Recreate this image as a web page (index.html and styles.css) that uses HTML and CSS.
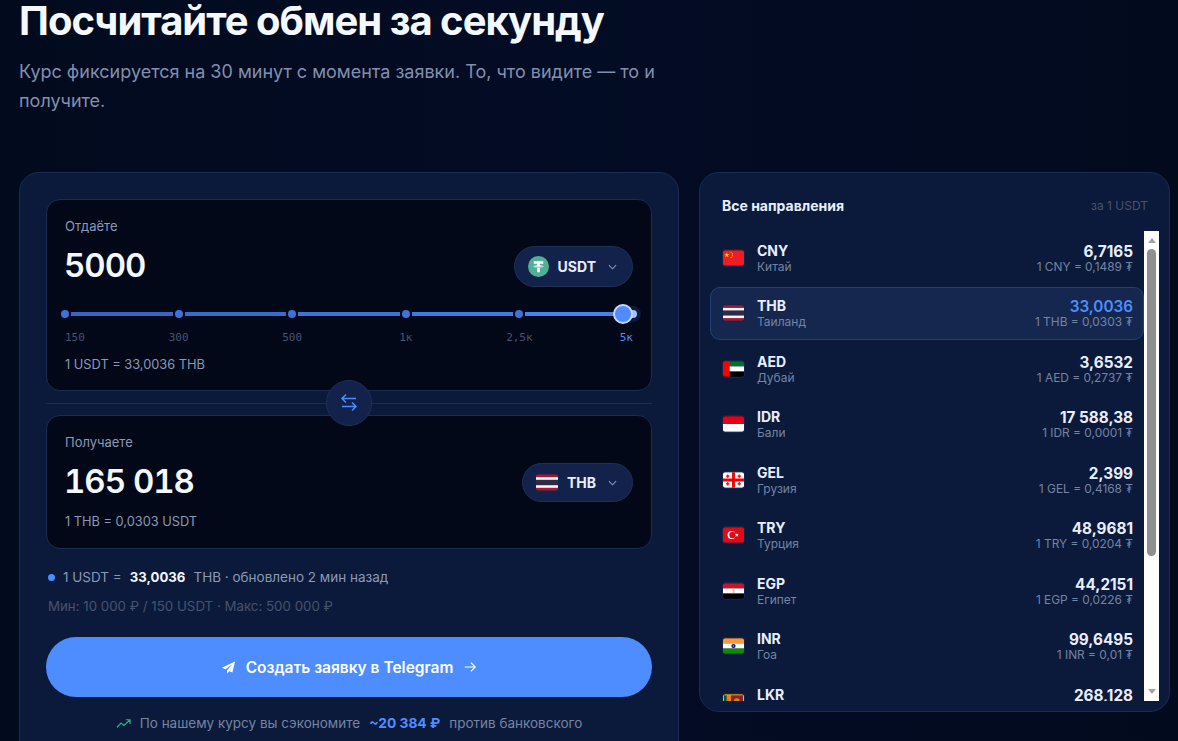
FILE: index.html
```html
<!DOCTYPE html>
<html lang="ru">

<head>
  <meta charset="UTF-8" />
  <title>Посчитайте обмен за секунду</title>
  <link rel="stylesheet" href="styles.css">
</head>

<body>
  <header class="intro">
    <h1>Посчитайте обмен за секунду</h1>
    <p>Курс фиксируется на 30 минут с момента заявки. То, что видите — то и получите.</p>
  </header>

  <main class="layout">
    <!-- Calculator -->
    <section class="card calc">
      <div class="box box-give">
        <div class="box-label">Отдаёте</div>
        <div class="amount-row">
          <div class="amount">5000</div>
          <button class="pill">
            <svg class="coin" viewBox="0 0 22 22">
              <circle cx="11" cy="11" r="11" fill="#50af95" />
              <path d="M6 5.500h10v2.600h-3.600v1.600c2.200.1 4 .6 4 1.200s-1.800 1.100-4 1.200v5H9.600v-5c-2.200-.1-4-.6-4-1.200s1.800-1.100 4-1.200V8.100H6z" fill="#fff" />
              <path d="M5.800 10.900c1.200.6 3 .8 5.200.8s4-.2 5.200-.8" fill="none" stroke="#50af95" stroke-width=".8" />
            </svg>
            <span>USDT</span>
            <svg class="chev" viewBox="0 0 10 6"><path d="M1 1l4 4 4-4" /></svg>
          </button>
        </div>

        <div class="slider">
          <i class="dot"></i><i class="seg s1"></i>
          <i class="dot"></i><i class="seg s2"></i>
          <i class="dot"></i><i class="seg s3"></i>
          <i class="dot"></i><i class="seg s4"></i>
          <i class="dot"></i><i class="seg s5"></i>
          <i class="dot last"></i>
          <span class="thumb"></span>
        </div>
        <div class="ticks">
          <span><em>150</em></span><span><em>300</em></span><span><em>500</em></span><span><em>1к</em></span><span><em>2,5к</em></span><span class="on"><em>5к</em></span>
        </div>
        <div class="rate-note">1 USDT = 33,0036 THB</div>
      </div>

      <div class="divider">
        <button class="swap">
          <svg viewBox="0 0 20 20">
            <path d="M17 6.500H3.500M7 2.500l-4 4 4 4" transform="translate(0 -1)" />
            <path d="M3 14h13.500M13 10l4 4-4 4" transform="translate(0 -.500)" />
          </svg>
        </button>
      </div>

      <div class="box box-get">
        <div class="box-label">Получаете</div>
        <div class="amount-row">
          <div class="amount">165 018</div>
          <button class="pill">
            <svg class="flag pill-flag" viewBox="0 0 22 16">
              <rect width="22" height="16" fill="#a51931" />
              <rect y="2.700" width="22" height="10.600" fill="#f4f5f8" />
              <rect y="5.300" width="22" height="5.400" fill="#2d2a4a" />
            </svg>
            <span>THB</span>
            <svg class="chev" viewBox="0 0 10 6"><path d="M1 1l4 4 4-4" /></svg>
          </button>
        </div>
        <div class="rate-note">1 THB = 0,0303 USDT</div>
      </div>

      <div class="live">
        <i class="live-dot"></i>
        <span>1 USDT =</span>
        <b>33,0036</b>
        <span>THB · обновлено 2 мин назад</span>
      </div>
      <div class="limits">Мин: 10 000 ₽ / 150 USDT · Макс: 500 000 ₽</div>

      <button class="cta">
        <svg class="plane" viewBox="0 0 16 16">
          <path d="M15 1.500L.8 8.200l4 1.600L12 4.500 6.500 10.800v3.700l2.400-2.600 3.300 1.500z" />
        </svg>
        <span>Создать заявку в Telegram</span>
        <svg class="arrow" viewBox="0 0 16 16"><path d="M2 8h12M9 3l5 5-5 5" /></svg>
      </button>

      <div class="saving">
        <svg viewBox="0 0 16 16"><path d="M1 12l4.500-4.500 3 2.500L15 4M10.500 4H15v4.500" /></svg>
        <span>По нашему курсу вы сэкономите</span>
        <b>~20 384 ₽</b>
        <span>против банковского</span>
      </div>
    </section>

    <!-- Rates -->
    <aside class="card rates">
      <div class="rates-head">
        <h2>Все направления</h2>
        <span>за 1 USDT</span>
      </div>
      <div class="rates-body">
        <div class="rate-list">
          <div class="rate">
            <svg class="flag" viewBox="0 0 22 16">
              <rect width="22" height="16" fill="#ee1c25" />
              <path d="M4 2l.7 2h2.100L5.100 5.200l.6 2L4 6l-1.700 1.200.6-2L1.200 4h2.100z" fill="#ffdd00" />
              <circle cx="8.500" cy="2" r=".6" fill="#ffdd00" /><circle cx="9.800" cy="3.700" r=".6" fill="#ffdd00" />
              <circle cx="9.800" cy="5.700" r=".6" fill="#ffdd00" /><circle cx="8.500" cy="7.300" r=".6" fill="#ffdd00" />
            </svg>
            <div class="rate-name"><b>CNY</b><span>Китай</span></div>
            <div class="rate-val"><b>6,7165</b><span>1 CNY = 0,1489 ₮</span></div>
          </div>
          <div class="rate active">
            <svg class="flag" viewBox="0 0 22 16">
              <rect width="22" height="16" fill="#a51931" />
              <rect y="2.700" width="22" height="10.600" fill="#f4f5f8" />
              <rect y="5.300" width="22" height="5.400" fill="#2d2a4a" />
            </svg>
            <div class="rate-name"><b>THB</b><span>Таиланд</span></div>
            <div class="rate-val"><b>33,0036</b><span>1 THB = 0,0303 ₮</span></div>
          </div>
          <div class="rate">
            <svg class="flag" viewBox="0 0 22 16">
              <rect width="22" height="5.400" fill="#00732f" />
              <rect y="5.300" width="22" height="5.400" fill="#fff" />
              <rect y="10.700" width="22" height="5.300" fill="#000" />
              <rect width="7" height="16" fill="#ff0000" />
            </svg>
            <div class="rate-name"><b>AED</b><span>Дубай</span></div>
            <div class="rate-val"><b>3,6532</b><span>1 AED = 0,2737 ₮</span></div>
          </div>
          <div class="rate">
            <svg class="flag" viewBox="0 0 22 16">
              <rect width="22" height="8" fill="#e70011" />
              <rect y="8" width="22" height="8" fill="#fff" />
            </svg>
            <div class="rate-name"><b>IDR</b><span>Бали</span></div>
            <div class="rate-val"><b>17 588,38</b><span>1 IDR = 0,0001 ₮</span></div>
          </div>
          <div class="rate">
            <svg class="flag" viewBox="0 0 22 16">
              <rect width="22" height="16" fill="#fff" />
              <path d="M9.500 0h3v16h-3zM0 6.500h22v3H0z" fill="#f00000" />
              <path d="M4.400 2.200h1.200v1.200h1.200v1.200H5.600v1.200H4.400V4.600H3.200V3.400h1.200zM16.400 2.200h1.200v1.200h1.200v1.200h-1.200v1.200h-1.200V4.600h-1.200V3.400h1.200zM4.400 10.200h1.200v1.200h1.200v1.200H5.600v1.200H4.400v-1.200H3.200v-1.200h1.200zM16.400 10.200h1.200v1.200h1.200v1.200h-1.200v1.200h-1.200v-1.200h-1.200v-1.200h1.200z" fill="#f00000" />
            </svg>
            <div class="rate-name"><b>GEL</b><span>Грузия</span></div>
            <div class="rate-val"><b>2,399</b><span>1 GEL = 0,4168 ₮</span></div>
          </div>
          <div class="rate">
            <svg class="flag" viewBox="0 0 22 16">
              <rect width="22" height="16" fill="#e30a17" />
              <circle cx="9" cy="8" r="4.200" fill="#fff" />
              <circle cx="10" cy="8" r="3.400" fill="#e30a17" />
              <path d="M14.500 5.800l.5 1.500h1.600l-1.300 1 .5 1.600-1.300-1-1.300 1 .5-1.600-1.300-1H14z" fill="#fff" />
            </svg>
            <div class="rate-name"><b>TRY</b><span>Турция</span></div>
            <div class="rate-val"><b>48,9681</b><span>1 TRY = 0,0204 ₮</span></div>
          </div>
          <div class="rate">
            <svg class="flag" viewBox="0 0 22 16">
              <rect width="22" height="5.400" fill="#ce1126" />
              <rect y="5.300" width="22" height="5.400" fill="#fff" />
              <rect y="10.700" width="22" height="5.300" fill="#000" />
              <rect x="10" y="5.800" width="2" height="4.400" fill="#e0c48a" />
            </svg>
            <div class="rate-name"><b>EGP</b><span>Египет</span></div>
            <div class="rate-val"><b>44,2151</b><span>1 EGP = 0,0226 ₮</span></div>
          </div>
          <div class="rate">
            <svg class="flag" viewBox="0 0 22 16">
              <rect width="22" height="5.400" fill="#ff9933" />
              <rect y="5.300" width="22" height="5.400" fill="#fff" />
              <rect y="10.700" width="22" height="5.300" fill="#138808" />
              <circle cx="11" cy="8" r="2.200" fill="#000080" />
              <circle cx="11" cy="8" r=".8" fill="#c8c8ff" />
            </svg>
            <div class="rate-name"><b>INR</b><span>Гоа</span></div>
            <div class="rate-val"><b>99,6495</b><span>1 INR = 0,01 ₮</span></div>
          </div>
          <div class="rate">
            <svg class="flag" viewBox="0 0 22 16">
              <rect width="22" height="16" fill="#ffb700" />
              <rect x="1" y="1" width="3" height="14" fill="#005641" />
              <rect x="4" y="1" width="3" height="14" fill="#ff7300" />
              <rect x="8" y="1" width="13" height="14" fill="#8d2029" />
              <circle cx="14.500" cy="7" r="3" fill="#c8862a" />
            </svg>
            <div class="rate-name"><b>LKR</b><span>Шри-Ланка</span></div>
            <div class="rate-val"><b>268,128</b><span>1 LKR = 0,0037 ₮</span></div>
          </div>
        </div>
        <!-- light scrollbar beside the list -->
        <div class="scrollbar">
          <i class="scroll-up"></i>
          <i class="scroll-thumb"></i>
          <i class="scroll-down"></i>
        </div>
      </div>
    </aside>
  </main>
</body>

</html>
```

FILE: styles.css
```css
* {
  box-sizing: border-box;
}

html,
body {
  height: 741px;
  overflow: hidden;
}

body {
  margin: 0;
  padding: 0 8px 0 19px;
  font-family: "Inter", "Noto Sans", sans-serif;
  background: linear-gradient(90deg, #020a1e 0%, #020c24 50%, #020a1e 100%);
  color: #f2f6ff;
}

button {
  font-family: inherit;
  cursor: pointer;
}

/* Intro */
.intro {
  display: flow-root;
  height: 172px;
}

.intro h1 {
  margin: -4px 0 0;
  font-size: 40px;
  line-height: 50px;
  font-weight: 700;
  letter-spacing: -1px;
  color: #f4f8ff;
}

.intro p {
  margin: 11px 0 0;
  max-width: 640px;
  font-size: 18px;
  line-height: 29px;
  color: #8090ae;
}

.layout {
  display: grid;
  grid-template-columns: 660px 471px;
  gap: 20px;
  align-items: start;
}

.card {
  background: #0b1a3a;
  border: 1px solid #1b2c52;
  border-radius: 20px;
}

/* Calculator */
.calc {
  padding: 26px 26px 40px;
}

.box {
  background: #020818;
  border: 1px solid #1b2c52;
  border-radius: 14px;
  padding: 18px 18px 0;
}

.box-give {
  height: 192px;
}

.box-get {
  height: 134px;
}

.box-label {
  font-size: 13px;
  line-height: 16px;
  color: #8a99b5;
}

.amount-row {
  display: flex;
  justify-content: space-between;
  align-items: center;
  height: 41px;
  margin-top: 12px;
}

.amount {
  margin: -2px 0 0 -1px;
  font-size: 33px;
  line-height: 41px;
  font-weight: 600;
  font-feature-settings: "tnum";
  letter-spacing: -1px;
  color: #f4f8ff;
}

.pill {
  display: flex;
  align-items: center;
  height: 41px;
  padding: 0 15px 0 13px;
  gap: 9px;
  background: #13224a;
  border: 1px solid #1e2f58;
  border-radius: 21px;
  color: #e8eefc;
  font-size: 14px;
  font-weight: 700;
}

.box-get .pill {
  height: 39px;
}

.coin {
  width: 21px;
  height: 21px;
}

.chev {
  width: 9px;
  height: 6px;
  margin-left: 3px;
  fill: none;
  stroke: #8a99b5;
  stroke-width: 1.200;
}

/* Slider */
.slider {
  position: relative;
  display: flex;
  align-items: center;
  height: 8px;
  margin: 23px -4px 0;
}

.dot {
  flex: none;
  width: 8px;
  height: 8px;
  border-radius: 50%;
  background: #3b73dd;
}

.dot.last {
  background: #a8c4ff;
  box-shadow: 0 0 0 4px #0c1a3c;
}

.seg {
  flex: 1;
  height: 4px;
  margin: 0 2px;
}

.s1 { background: #3666bf; }
.s2 { background: #386cc9; }
.s3 { background: #3b73d6; }
.s4 { background: #3f79e2; }
.s5 { background: #4781f0; }

.thumb {
  position: absolute;
  top: -6px;
  right: 4px;
  width: 20px;
  height: 20px;
  border-radius: 50%;
  background: #4d8dff;
  border: 2px solid #c3d7ff;
}

/* zero-width ticks so each label centres under its dot */
.ticks {
  display: flex;
  justify-content: space-between;
  margin-top: 13px;
  font-family: "DejaVu Sans Mono", "Liberation Mono", monospace;
  font-size: 11px;
  line-height: 14px;
  color: #46536f;
}

.ticks span {
  display: flex;
  justify-content: center;
  width: 0;
}

.ticks span:first-child {
  justify-content: flex-start;
}

.ticks span:last-child {
  justify-content: flex-end;
}

.ticks em {
  font-style: normal;
}

.ticks .on {
  color: #4d8dff;
}

.rate-note {
  margin-top: 12px;
  font-size: 12.800px;
  line-height: 16px;
  color: #8a99b5;
}

.box-get .rate-note {
  margin-top: 11px;
}

.divider {
  display: flex;
  justify-content: center;
  align-items: center;
  height: 24px;
  background: linear-gradient(#1b2c52, #1b2c52) center / 100% 1px no-repeat;
}

.swap {
  position: relative;
  z-index: 1;
  display: flex;
  align-items: center;
  justify-content: center;
  flex: none;
  width: 46px;
  height: 46px;
  padding: 0;
  border-radius: 50%;
  background: #13224a;
  border: 1px solid #1e2f58;
}

.swap svg {
  width: 20px;
  height: 20px;
  fill: none;
  stroke: #4d8dff;
  stroke-width: 1.500;
}

/* Status lines */
.live {
  display: flex;
  align-items: center;
  gap: 8px;
  margin-top: 20px;
  padding-left: 2px;
  font-size: 13.500px;
  line-height: 16px;
  color: #8a99b5;
}

.live-dot {
  width: 7px;
  height: 7px;
  border-radius: 50%;
  background: #4d8dff;
}

.live b {
  color: #f2f6ff;
  font-size: 13.200px;
  font-weight: 700;
}

.limits {
  margin-top: 13px;
  padding-left: 2px;
  font-size: 13.300px;
  line-height: 16px;
  color: #46536f;
}

.cta {
  display: flex;
  align-items: center;
  justify-content: center;
  gap: 10px;
  width: 100%;
  height: 60px;
  margin-top: 23px;
  border: 0;
  border-radius: 30px;
  background: #4d8dff;
  color: #fff;
  font-size: 15.500px;
  font-weight: 600;
}

.plane {
  width: 15px;
  height: 15px;
  fill: #fff;
}

.arrow {
  width: 14px;
  height: 14px;
  fill: none;
  stroke: #fff;
  stroke-width: 1.300;
}

.saving {
  display: flex;
  align-items: center;
  justify-content: center;
  gap: 9px;
  margin-top: 18px;
  font-size: 13.500px;
  line-height: 16px;
  color: #7484a3;
}

.saving svg {
  width: 15px;
  height: 15px;
  fill: none;
  stroke: #2bb27c;
  stroke-width: 1.300;
}

.saving b {
  color: #4d8dff;
  font-size: 13.800px;
  font-weight: 700;
}

/* Rates */
.rates {
  height: 540px;
  padding: 0 10px;
}

.rates-head {
  display: flex;
  justify-content: space-between;
  align-items: center;
  height: 58px;
  padding: 6px 11px 0 12px;
}

.rates-head h2 {
  margin: 0;
  font-size: 14px;
  font-weight: 700;
  color: #e8eefc;
}

.rates-head span {
  font-size: 12px;
  color: #46536f;
}

.rates-body {
  display: flex;
  height: 470px;
}

.rate-list {
  flex: 1;
  display: flex;
  flex-direction: column;
  gap: 2px;
  overflow: hidden;
}

.rate {
  flex: none;
  display: flex;
  align-items: center;
  height: 53.500px;
  padding: 0 10px 0 12px;
  border: 1px solid transparent;
  border-radius: 10px;
}

.rate.active {
  background: #15274f;
  border-color: #21407a;
}

.flag {
  flex: none;
  width: 21px;
  height: 16px;
  border-radius: 2px;
  outline: 1px solid #14244a;
}

.pill-flag {
  width: 22px;
  height: 17px;
}

.rate-name {
  display: flex;
  flex-direction: column;
  margin-left: 13px;
}

.rate-name b {
  font-size: 14px;
  line-height: 17px;
  font-weight: 700;
  color: #e8eefc;
}

.rate-name span {
  font-size: 12px;
  line-height: 15px;
  color: #7484a3;
}

.rate-val {
  display: flex;
  flex-direction: column;
  align-items: flex-end;
  margin-left: auto;
}

.rate-val b {
  font-size: 15.300px;
  line-height: 17px;
  font-weight: 700;
  color: #e8eefc;
}

.rate-val span {
  font-size: 11.900px;
  line-height: 13px;
  color: #7484a3;
}

.rate.active .rate-val b {
  color: #4d8dff;
  font-weight: 600;
}

/* Scrollbar */
.scrollbar {
  flex: none;
  display: flex;
  flex-direction: column;
  align-items: center;
  width: 15px;
  background: #fff;
}

.scroll-up,
.scroll-down {
  width: 0;
  height: 0;
  border-left: 4.500px solid transparent;
  border-right: 4.500px solid transparent;
}

.scroll-up {
  margin-top: 7px;
  border-bottom: 5px solid #a3a3a3;
}

.scroll-down {
  margin: auto 0 7px;
  border-top: 5px solid #a3a3a3;
}

.scroll-thumb {
  width: 9px;
  height: 307px;
  margin-top: 6px;
  border-radius: 5px;
  background: #8f8f8f;
}
```
